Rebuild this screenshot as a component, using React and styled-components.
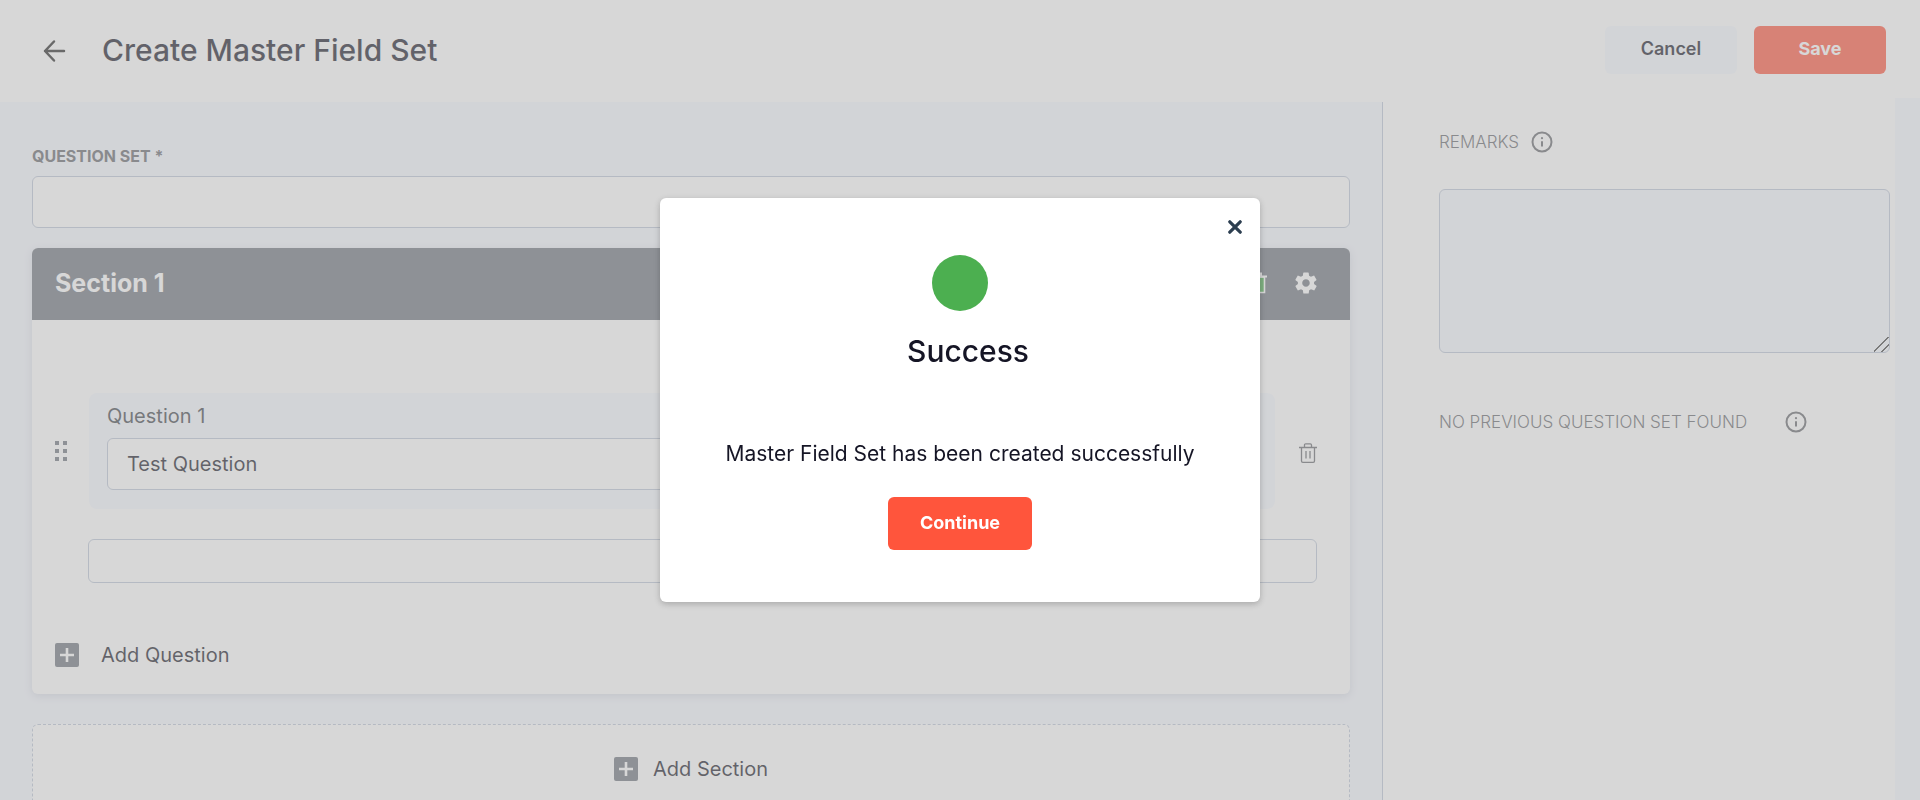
import React, { useState } from "react";
import styled, { createGlobalStyle, css } from "styled-components";
import { IoMdSettings } from "react-icons/io";

const color = {
  page: "#f5f8ff",
  line: "#bbc5d6",
  slate: "#6d737d",
  ink: "#151525",
  muted: "#63656a",
  brand: "#ff553c",
  success: "#4caf50",
};

const GlobalStyle = createGlobalStyle`
  *, *::before, *::after { box-sizing: border-box; }
  body {
    margin: 0;
    overflow: hidden;
    background: ${color.page};
    color: ${color.ink};
    font-family: Inter, "Liberation Sans", sans-serif;
    font-size: 20px;
    line-height: 24px;
  }
  button, input, textarea { font: inherit; color: inherit; }
  h1, h2, p { margin: 0; }
  svg { display: block; }
`;

const Page = styled.div`
  display: flex;
  flex-direction: column;
  min-height: 100vh;
`;

const Header = styled.header`
  display: flex;
  align-items: center;
  height: 98px;
  padding: 2px 34px 0 40px;
  background: #fff;
`;

const Title = styled.h1`
  flex: 1;
  margin-left: 34px;
  font-size: 30px;
  line-height: 40px;
  font-weight: 500;
`;

const Actions = styled.div`
  display: flex;
  gap: 17px;
`;

const Button = styled.button`
  height: 48px;
  min-width: 132px;
  padding: 0 32px 2px;
  border: 0;
  border-radius: 6px;
  cursor: pointer;
  font-size: 18px;
  font-weight: 600;
  background: ${color.page};
  ${({ $primary }) =>
    $primary &&
    css`
      background: ${color.brand};
      color: #fff;
      font-weight: 700;
    `}
`;

const ContinueButton = styled(Button)`
  height: 53px;
  min-width: 144px;
`;

const IconButton = styled.button`
  display: flex;
  flex: none;
  padding: 0;
  border: 0;
  background: none;
  color: ${({ $tone }) => $tone || color.muted};
  cursor: pointer;
`;

const Body = styled.div`
  display: flex;
  flex: 1;
  margin-right: 25px;
  padding-top: 4px;
  background: #fff;
`;

const Editor = styled.main`
  flex: 1;
  min-width: 0;
  padding: 42px 32px 0;
  background: ${color.page};
`;

const FieldLabel = styled.label`
  display: block;
  margin-bottom: 8px;
  font-size: 16px;
  font-weight: 700;
  color: ${color.muted};
`;

const TextInput = styled.input`
  display: block;
  width: 100%;
  height: ${({ $compact }) => ($compact ? "44px" : "52px")};
  padding: 0 19px;
  border: 1px solid ${color.line};
  border-radius: 6px;
  background: #fff;
  outline: none;
`;

const SectionCard = styled.section`
  margin-top: 20px;
  border-radius: 6px;
  background: #fff;
  box-shadow: 0 2px 8px rgba(50, 60, 90, 0.16);
  overflow: hidden;
`;

const SectionHeader = styled.div`
  display: flex;
  align-items: center;
  gap: 26px;
  height: 72px;
  padding: 0 31px 2px 23px;
  background: ${color.slate};
  color: #fff;
`;

const SectionTitle = styled.h2`
  flex: 1;
  font-size: 25px;
  line-height: 32px;
  font-weight: 700;
`;

const SectionBody = styled.div`
  padding: 73px 33px 27px 23px;
`;

const QuestionRow = styled.div`
  display: flex;
  align-items: center;
`;

const DragHandle = styled.div`
  display: grid;
  grid-template-columns: 4px 4px;
  gap: 4px;
  width: 34px;
  cursor: grab;
`;

const Dot = styled.span`
  height: 4px;
  background: ${color.slate};
`;

const QuestionBox = styled.div`
  flex: 1;
  margin-right: 24px;
  padding: 11px 18px 19px;
  border-radius: 8px;
  background: ${color.page};
`;

const QuestionLabel = styled.label`
  display: block;
  margin-bottom: 10px;
  color: #3d4248;
`;

const AnswerSlot = styled.div`
  margin: 30px 0 60px 33px;
`;

const AddButton = styled.button`
  display: flex;
  align-items: center;
  gap: ${({ $gap }) => $gap};
  padding: 0;
  border: 0;
  background: none;
  cursor: pointer;
`;

const AddSectionBox = styled.div`
  display: flex;
  justify-content: center;
  margin-top: 30px;
  padding: 32px 0;
  border: 1px dashed ${color.line};
  border-radius: 6px;
  background: #fff;
`;

const Sidebar = styled.aside`
  flex: 0 0 513px;
  padding: 28px 5px 0 56px;
  border-left: 1px solid ${color.line};
  background: #fff;
`;

const SideHeading = styled.div`
  display: flex;
  align-items: center;
  gap: ${({ $gap }) => $gap};
  font-size: 17px;
  font-weight: 300;
  color: ${color.muted};
`;

const RemarksInput = styled.textarea`
  display: block;
  width: 100%;
  height: 164px;
  margin: 35px 0 57px;
  padding: 12px 20px;
  border: 1px solid ${color.line};
  border-radius: 6px;
  background: ${color.page};
  outline: none;

  &::-webkit-resizer {
    background: linear-gradient(
      135deg,
      transparent 46%,
      #444 46% 53%,
      transparent 53% 72%,
      #444 72% 79%,
      transparent 79%
    );
  }
`;

const Overlay = styled.div`
  position: fixed;
  inset: 0;
  z-index: 10;
  display: flex;
  align-items: center;
  justify-content: center;
  background: rgba(175, 175, 175, 0.5);
`;

const Dialog = styled.div`
  display: flex;
  flex-direction: column;
  align-items: center;
  width: 600px;
  max-width: 100%;
  padding: 22px 18px 52px;
  border-radius: 6px;
  background: #fff;
  box-shadow: 0 2px 6px rgba(0, 0, 0, 0.22);
`;

const CloseButton = styled(IconButton)`
  align-self: flex-end;
`;

const StatusDot = styled.div`
  width: 56px;
  height: 56px;
  margin-top: 21px;
  border-radius: 50%;
  background: ${color.success};
`;

const DialogTitle = styled.h2`
  margin: 20px 0 71px;
  padding-left: 16px;
  font-size: 30px;
  line-height: 40px;
  font-weight: 500;
`;

const Message = styled.p`
  margin-bottom: 31px;
  font-size: 21px;
`;

const ArrowIcon = () => (
  <svg width="28" height="28" viewBox="0 0 28 28" fill="none" stroke="#222" strokeWidth="2.500" strokeLinecap="round" strokeLinejoin="round" aria-hidden="true">
    <path d="M24 15H5M14 5.500L5 15L14 24.500" />
  </svg>
);

const InfoIcon = () => (
  <svg width="22" height="22" viewBox="0 0 22 22" fill="none" stroke="currentColor" aria-hidden="true">
    <circle cx="11" cy="11" r="9.500" strokeWidth="2" />
    <path d="M11 10.200V15.500" strokeWidth="2" />
    <circle cx="11" cy="7.200" r="1.100" fill="currentColor" stroke="none" />
  </svg>
);

const TrashIcon = () => (
  <svg width="18" height="24" viewBox="0 -4 18 24" fill="none" stroke="currentColor" strokeWidth="1.300" aria-hidden="true">
    <path d="M0 4.500H18M5.500 4.500V2Q5.500 .8 6.700 .8H11.300Q12.500 .8 12.500 2V4.500M2.500 4.500V18Q2.500 19.300 3.800 19.300H14.200Q15.500 19.300 15.500 18V4.500M7 8V15.500M11 8V15.500" />
  </svg>
);

const SectionTrashIcon = () => (
  <svg width="20" height="22" viewBox="0 0 20 22" aria-hidden="true">
    <path d="M3 5H17.500V20.500H3Z" fill="#4caf50" stroke="#fff" strokeWidth="1.600" />
    <path d="M1 4.500H20M6 4V1.500H14V4" fill="none" stroke="#fff" strokeWidth="2" />
  </svg>
);

const PlusIcon = () => (
  <svg width="24" height="24" viewBox="0 0 24 24" aria-hidden="true">
    <rect width="24" height="24" rx="2" fill={color.slate} />
    <path d="M12 5V19M5 12H19" stroke="#fff" strokeWidth="2.600" />
  </svg>
);

const CloseIcon = () => (
  <svg width="14" height="14" viewBox="0 0 14 14" stroke="#2c3e50" strokeWidth="3.200" strokeLinecap="round" aria-hidden="true">
    <path d="M1.800 1.800L12.200 12.200M12.200 1.800L1.800 12.200" />
  </svg>
);

export default function App() {
  const [open, setOpen] = useState(true);
  const close = () => setOpen(false);

  return (
    <>
      <GlobalStyle />
      <Page>
        <Header>
          <IconButton type="button" aria-label="Back">
            <ArrowIcon />
          </IconButton>
          <Title>Create Master Field Set</Title>
          <Actions>
            <Button type="button">Cancel</Button>
            <Button type="button" $primary>Save</Button>
          </Actions>
        </Header>

        <Body>
          <Editor>
            <FieldLabel htmlFor="question-set">QUESTION SET *</FieldLabel>
            <TextInput id="question-set" type="text" />

            <SectionCard>
              <SectionHeader>
                <SectionTitle>Section 1</SectionTitle>
                <IconButton type="button" aria-label="Delete section" $tone="#fff">
                  <SectionTrashIcon />
                </IconButton>
                <IconButton type="button" aria-label="Section settings" $tone="#fff">
                  <IoMdSettings size={26} />
                </IconButton>
              </SectionHeader>
              <SectionBody>
                <QuestionRow>
                  <DragHandle>
                    <Dot /><Dot /><Dot /><Dot /><Dot /><Dot />
                  </DragHandle>
                  <QuestionBox>
                    <QuestionLabel htmlFor="question-1">Question 1</QuestionLabel>
                    <TextInput id="question-1" type="text" defaultValue="Test Question" />
                  </QuestionBox>
                  <IconButton type="button" aria-label="Delete question">
                    <TrashIcon />
                  </IconButton>
                </QuestionRow>
                <AnswerSlot>
                  <TextInput type="text" aria-label="Answer" $compact />
                </AnswerSlot>
                <AddButton type="button" $gap="22px">
                  <PlusIcon />
                  Add Question
                </AddButton>
              </SectionBody>
            </SectionCard>

            <AddSectionBox>
              <AddButton type="button" $gap="15px">
                <PlusIcon />
                Add Section
              </AddButton>
            </AddSectionBox>
          </Editor>

          <Sidebar>
            <SideHeading $gap="12px">
              <label htmlFor="remarks">REMARKS</label>
              <InfoIcon />
            </SideHeading>
            <RemarksInput id="remarks" />
            <SideHeading $gap="38px">
              <span>NO PREVIOUS QUESTION SET FOUND</span>
              <InfoIcon />
            </SideHeading>
          </Sidebar>
        </Body>
      </Page>

      {open && (
        <Overlay>
          <Dialog role="dialog" aria-modal="true" aria-labelledby="dialog-title">
            <CloseButton type="button" aria-label="Close" onClick={close}>
              <CloseIcon />
            </CloseButton>
            <StatusDot />
            <DialogTitle id="dialog-title">Success</DialogTitle>
            <Message>Master Field Set has been created successfully</Message>
            <ContinueButton type="button" $primary onClick={close}>Continue</ContinueButton>
          </Dialog>
        </Overlay>
      )}
    </>
  );
}
